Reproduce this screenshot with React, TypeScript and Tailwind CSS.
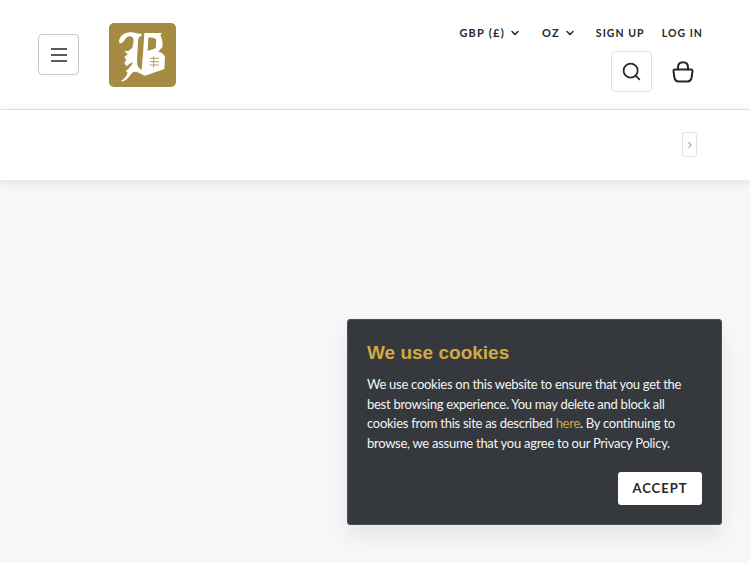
import { ChevronDown, ChevronRight, Search } from "lucide-react";

const BODY_FONT = "font-['Lato','Noto_Sans',sans-serif]";

const Logo = () => (
  <div className="flex h-[64px] w-[67px] items-center justify-center rounded-[5px] bg-[#a68c42]">
    <svg width="67" height="64" viewBox="266 38 201 192" fill="#fff">
      {/* stem with the top curl and the lower flourishes */}
      <path d="M296 92 C298 76 314 64 334 66 C344 67 352 72 364 70 L362 78 C356 78 354 84 353 94 L350 150 C350 166 354 174 364 178 L378 186 L372 196 C362 190 352 184 342 184 C334 186 330 196 322 204 C316 210 310 214 302 212 C312 206 318 198 322 188 L316 182 L326 174 C330 168 336 164 338 156 L328 160 L318 168 L312 158 L318 148 L312 140 L322 132 L312 122 L324 122 L336 112 L340 92 C340 84 336 78 328 78 C318 78 314 88 308 96 L298 100 Z" />
      {/* bowls of the B */}
      <path fillRule="evenodd" d="M372 68 L424 68 L420 76 C426 84 428 98 426 110 L414 124 C424 126 432 132 434 140 L432 176 L404 186 L374 196 L370 188 L364 178 L368 130 Z M384 82 L382 122 L406 114 L408 88 C402 82 394 80 384 82 Z" />
      <path d="M388 144 H416 M388 154 H416 M388 164 H416 M400 138 V172" stroke="#a68c42" strokeWidth="2.5" fill="none" />
    </svg>
  </div>
);

const MenuIcon = () => (
  <svg width="16" height="14" viewBox="0 0 16 14" stroke="#25282d" strokeWidth="1.7">
    <path d="M0 1 H16 M0 7 H16 M0 13 H16" />
  </svg>
);

const NavLabel = ({ children, chevron }: { children: string; chevron?: boolean }) => (
  <span className="flex items-center gap-[4px] text-[11px] leading-[12px] font-bold tracking-[1.25px] text-[#25282d]">
    {children}
    {chevron ? <ChevronDown size={12} strokeWidth={3} /> : null}
  </span>
);

const NavLink = ({ children }: { children: string }) => (
  <span className="mt-[1px] block text-[10.5px] leading-[11px] font-bold tracking-[1.05px] text-[#25282d]">{children}</span>
);

const BagIcon = () => (
  <svg width="22" height="22" viewBox="0 0 22 22" fill="none" stroke="#25282d" strokeWidth="2" strokeLinejoin="round" strokeLinecap="round">
    <path d="M6 8.5 V6.5 C6 3 8 1.2 11 1.2 C14 1.2 16 3 16 6.5 V8.5" />
    <path d="M3 8.5 H19 C20 8.5 20.6 9.2 20.5 10.2 L19.6 16.5 C19.2 19 17.6 20.4 15.4 20.4 H6.6 C4.4 20.4 2.8 19 2.4 16.5 L1.5 10.2 C1.4 9.2 2 8.5 3 8.5 Z" />
  </svg>
);

const App = () => (
  <div className={`relative flex h-[563px] flex-col overflow-hidden bg-[#f7f7fa] ${BODY_FONT}`}>
    <header className="flex h-[110px] items-start justify-between border-b border-[#e4e4e4] bg-white pr-[47px] pl-[38px]">
      <div className="flex items-center gap-[30px] pt-[23px]">
        <button className="mb-[1px] flex h-[41px] w-[41px] items-center justify-center rounded-[4px] border border-[#c9c9c9]">
          <MenuIcon />
        </button>
        <Logo />
      </div>
      <div className="flex flex-col items-end pt-[27px]">
        <nav className="flex h-[12px] items-start">
          <NavLabel chevron>GBP (£)</NavLabel>
          <span className="ml-[21px]"><NavLabel chevron>OZ</NavLabel></span>
          <span className="ml-[20px]"><NavLink>SIGN UP</NavLink></span>
          <span className="ml-[17px]"><NavLink>LOG IN</NavLink></span>
        </nav>
        <div className="mt-[12px] flex items-center gap-[20px] pr-[9px]">
          <button className="flex h-[41px] w-[41px] items-center justify-center rounded-[4px] border border-[#e2e2e2] text-[#25282d]">
            <Search size={21} strokeWidth={2} />
          </button>
          <BagIcon />
        </div>
      </div>
    </header>
    <div className="flex h-[70px] items-center justify-end bg-white pr-[53px] shadow-[0_2px_10px_rgba(0,0,0,0.1)]">
      <button className="mb-[1px] flex h-[25px] w-[15px] items-center justify-center rounded-[3px] border border-[#e2e2e2] text-[#55585c]">
        <ChevronRight size={10} strokeWidth={2} />
      </button>
    </div>
    <section className="absolute top-[319px] left-[347px] flex h-[206px] w-[375px] flex-col rounded-[3px] border border-[#4b4e53] bg-[#35383d] px-[19px] pt-[20px] pb-[19px] shadow-[0_12px_22px_rgba(0,0,0,0.07)]">
      <h2 className="font-['Liberation_Sans',sans-serif] text-[19px] leading-[26px] font-bold text-[#d0aa42]">We use cookies</h2>
      <p className="mt-[9px] text-[13px] leading-[19.6px] tracking-[-0.27px] text-[#f4f4f4]">
        We use cookies on this website to ensure that you get the best browsing experience. You may delete and block all cookies from this site as described <span className="text-[#d0aa42]">here</span>. By continuing to browse, we assume that you agree to our Privacy Policy.
      </p>
      <div className="mt-auto flex justify-end">
        <button className="flex h-[33px] w-[84px] items-center justify-center rounded-[3px] bg-white text-[13px] font-bold tracking-[1px] text-[#25282d]">
          ACCEPT
        </button>
      </div>
    </section>
  </div>
);

export default App;
